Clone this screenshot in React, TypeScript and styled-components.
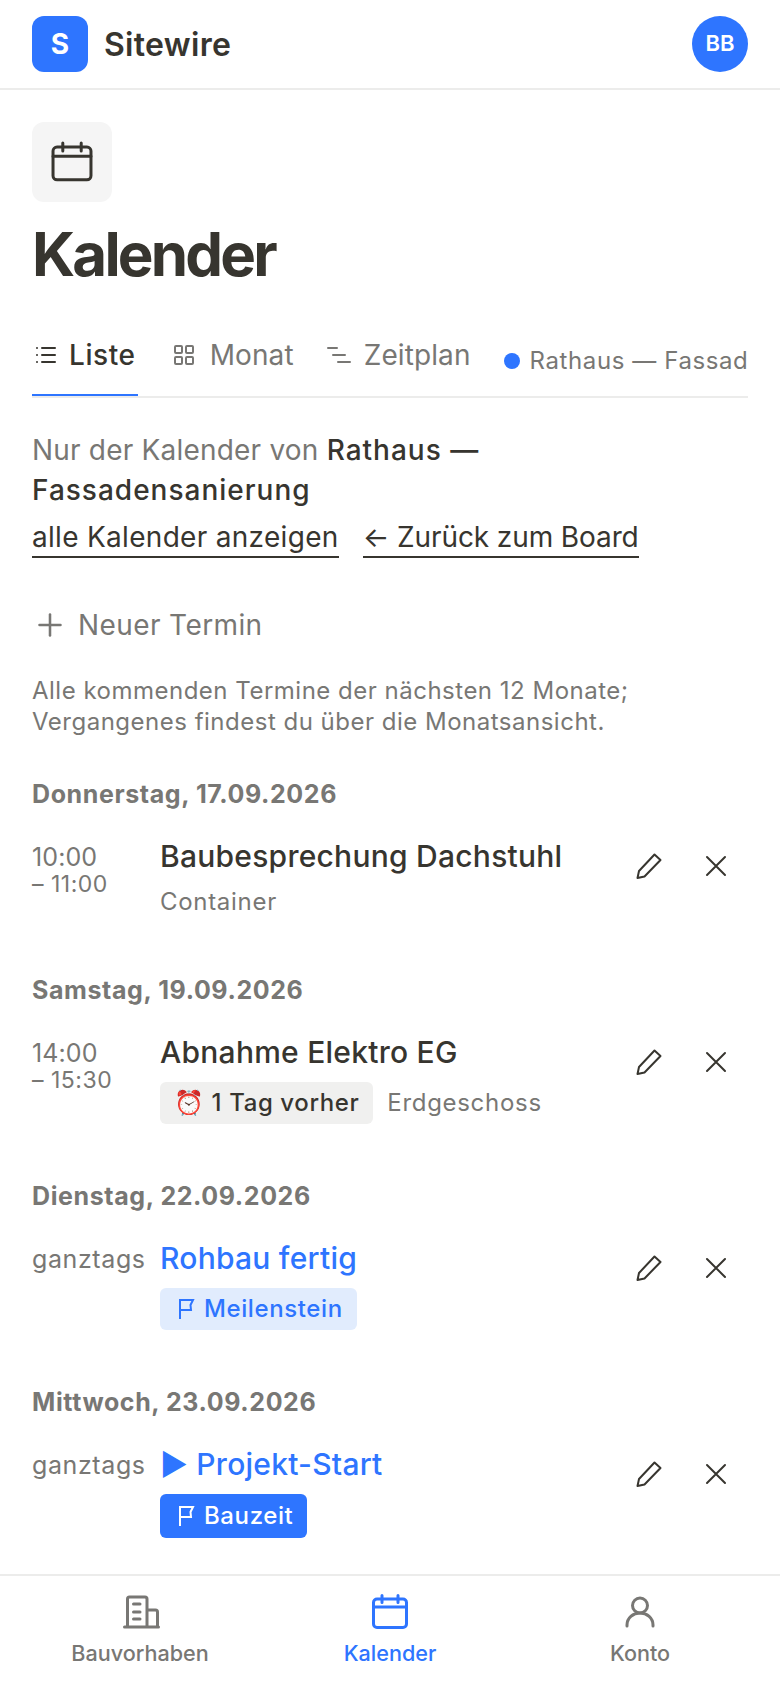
import styled, { createGlobalStyle } from 'styled-components';
import { LayoutGrid, List, Plus } from 'lucide-react';

const INK = '#37352f';
const MUTED = '#787774';
const BLUE = '#2e75ff';
const LINE = '#ececeb';

const GlobalStyle = createGlobalStyle`
  * {
    box-sizing: border-box;
  }

  html,
  body {
    margin: 0;
    padding: 0;
    background: #fff;
  }

  body {
    font-family: Inter, 'Noto Sans', sans-serif;
    color: ${INK};
  }
`;

const Shell = styled.div`
  display: flex;
  flex-direction: column;
  width: 780px;
  height: 1688px;
  overflow: hidden;
`;

const TopBar = styled.header`
  display: flex;
  align-items: center;
  justify-content: space-between;
  flex: none;
  height: 90px;
  padding: 0 32px;
  border-bottom: 2px solid ${LINE};
`;

const Brand = styled.div`
  display: flex;
  align-items: center;
  gap: 16px;
  font-size: 32px;
  font-weight: 600;
  letter-spacing: 0.3px;
`;

const LogoMark = styled.div`
  display: grid;
  place-items: center;
  width: 56px;
  height: 56px;
  border-radius: 12px;
  background: ${BLUE};
  color: #fff;
  font-size: 28px;
  font-weight: 700;
`;

const Avatar = styled.div`
  display: grid;
  place-items: center;
  width: 56px;
  height: 56px;
  padding-bottom: 3px;
  border-radius: 50%;
  background: ${BLUE};
  color: #fff;
  font-size: 22px;
  font-weight: 600;
`;

const Main = styled.main`
  flex: 1;
  min-height: 0;
  overflow: hidden;
  padding: 32px 32px 0;
`;

const IconTile = styled.div`
  display: grid;
  place-items: center;
  width: 80px;
  height: 80px;
  border-radius: 12px;
  background: #f5f5f5;
  color: ${INK};
`;

const PageTitle = styled.h1`
  margin: 16px 0 0;
  font-size: 60px;
  line-height: 72px;
  font-weight: 700;
  letter-spacing: -2.8px;
`;

const TabBar = styled.nav`
  display: flex;
  align-items: flex-start;
  height: 75px;
  margin-top: 33px;
  border-bottom: 2px solid ${LINE};
`;

const Tab = styled.div<{ $active?: boolean; $gap: number; $trail: number }>`
  display: flex;
  align-items: center;
  flex: none;
  gap: ${({ $gap }) => $gap}px;
  height: 73px;
  margin-right: ${({ $trail }) => $trail}px;
  padding: 0 2px 8px;
  font-size: 28px;
  font-weight: ${({ $active }) => ($active ? 500 : 400)};
  letter-spacing: ${({ $active }) => ($active ? '0.6px' : '0.1px')};
  color: ${({ $active }) => ($active ? INK : MUTED)};
  border-bottom: 2px solid ${({ $active }) => ($active ? BLUE : 'transparent')};
`;

const ProjectFilter = styled.div`
  display: flex;
  align-items: center;
  gap: 10px;
  min-width: 0;
  flex: 1;
  height: 73px;
  padding-top: 2px;
  margin-left: -2px;
  font-size: 24px;
  letter-spacing: 0.6px;
  color: ${MUTED};
  white-space: nowrap;
  overflow: hidden;
`;

const Dot = styled.span`
  flex: none;
  width: 16px;
  height: 16px;
  border-radius: 50%;
  background: ${BLUE};
`;

const ScopeText = styled.p`
  margin: 32px 0 0;
  max-width: 520px;
  font-size: 28px;
  line-height: 40px;
  color: ${MUTED};
  letter-spacing: 0.2px;

  strong {
    color: ${INK};
    font-weight: 500;
    letter-spacing: 1px;
  }
`;

const LinkRow = styled.div`
  display: flex;
  gap: 24px;
  margin-top: 9px;
`;

const TextLink = styled.a<{ $tight?: boolean }>`
  font-size: 28px;
  line-height: 37px;
  color: ${INK};
  letter-spacing: ${({ $tight }) => ($tight ? '-0.1px' : '0.3px')};
  border-bottom: 2px solid ${INK};
`;

const NewButton = styled.div`
  display: flex;
  align-items: center;
  gap: 10px;
  margin-top: 45px;
  height: 44px;
  font-size: 28px;
  letter-spacing: 0.4px;
  color: ${MUTED};
`;

const Hint = styled.p`
  margin: 28px 0 0;
  font-size: 24px;
  line-height: 31px;
  letter-spacing: 0.5px;
  color: ${MUTED};
`;

const DayGroup = styled.section<{ $gap: number }>`
  margin-top: ${({ $gap }) => $gap}px;
`;

const DayLabel = styled.h2`
  margin: 0;
  font-size: 25px;
  line-height: 32px;
  font-weight: 700;
  letter-spacing: 0.6px;
  color: ${MUTED};
`;

const EventRow = styled.div`
  display: grid;
  grid-template-columns: 128px 1fr auto;
  margin-top: 26px;
`;

const TimeCol = styled.div<{ $allDay?: boolean }>`
  padding-top: 6px;
  font-size: 25px;
  line-height: 30px;
  letter-spacing: ${({ $allDay }) => ($allDay ? '0.6px' : '0.1px')};
  color: ${MUTED};
  white-space: nowrap;

  small {
    display: block;
    margin-top: -1px;
    font-size: 23px;
    line-height: 26px;
    letter-spacing: 0.5px;
  }
`;

const Body = styled.div`
  min-width: 0;
`;

const EventTitle = styled.div<{ $accent?: boolean }>`
  font-size: 30px;
  line-height: 40px;
  font-weight: 500;
  letter-spacing: 0.25px;
  color: ${({ $accent }) => ($accent ? BLUE : INK)};
`;

const MetaRow = styled.div`
  display: flex;
  align-items: center;
  gap: 14px;
  margin-top: 10px;
  font-size: 24px;
  line-height: 32px;
  letter-spacing: 0.7px;
  color: ${MUTED};
`;

const Chip = styled.span<{ $tone: 'gray' | 'soft' | 'solid' }>`
  display: inline-flex;
  align-items: center;
  gap: 6px;
  height: ${({ $tone }) => ($tone === 'solid' ? 44 : 42)}px;
  padding: 0 14px;
  border-radius: 6px;
  font-size: 24px;
  font-weight: 500;
  letter-spacing: 0.6px;
  background: ${({ $tone }) =>
    $tone === 'gray' ? '#f0f0ef' : $tone === 'soft' ? '#e1ecfd' : BLUE};
  color: ${({ $tone }) => ($tone === 'gray' ? INK : $tone === 'soft' ? BLUE : '#fff')};
`;

const Actions = styled.div`
  display: flex;
  gap: 3px;
`;

const IconButton = styled.button`
  display: grid;
  place-items: center;
  width: 64px;
  height: 60px;
  padding: 0;
  border: 0;
  background: none;
  color: ${INK};
`;

const BottomNav = styled.nav`
  display: grid;
  grid-template-columns: repeat(3, 1fr);
  flex: none;
  height: 114px;
  padding: 0 15px;
  border-top: 2px solid ${LINE};
`;

const NavItem = styled.div<{ $active?: boolean }>`
  display: flex;
  flex-direction: column;
  align-items: center;
  gap: 8px;
  padding-top: 16px;
  font-size: 21.6px;
  font-weight: 500;
  color: ${({ $active }) => ($active ? BLUE : MUTED)};
`;

function CalendarIcon({ size }: { size: number }) {
  const stroke = (3 * 40) / size;
  return (
    <svg width={size} height={size} viewBox="0 0 40 40" fill="none" stroke="currentColor" strokeWidth={stroke} strokeLinecap="round">
      <rect x="3.5" y="7" width="33" height="28.500" rx="3.500" />
      <path d="M12 3.500v7M28 3.500v7M3.500 15h33" />
    </svg>
  );
}

function TimelineIcon() {
  return (
    <svg width="26" height="26" viewBox="0 0 26 26" fill="none" stroke="currentColor" strokeWidth="2" strokeLinecap="round">
      <path d="M2 6h9M7 13h12M12 20h12" />
    </svg>
  );
}

function PenIcon() {
  return (
    <svg width="28" height="28" viewBox="0 0 28 28" fill="none" stroke="currentColor" strokeWidth="2" strokeLinejoin="round">
      <path d="M2.500 26 4 19 19.500 2.500 25.500 8 9.500 24.500Z" />
    </svg>
  );
}

function CloseIcon() {
  return (
    <svg width="24" height="24" viewBox="0 0 24 24" fill="none" stroke="currentColor" strokeWidth="2" strokeLinecap="round">
      <path d="M3 3l18 18M21 3 3 21" />
    </svg>
  );
}

function FlagIcon() {
  return (
    <svg width="24" height="24" viewBox="0 0 24 24" fill="none" stroke="currentColor" strokeWidth="2">
      <path d="M6 22V3h13l-2.500 5 .5 5H6" />
    </svg>
  );
}

function BuildingIcon() {
  return (
    <svg width="40" height="40" viewBox="0 0 40 40" fill="none" stroke="currentColor" strokeWidth="3" strokeLinecap="round" strokeLinejoin="round">
      <path d="M4.500 35h34M7.500 35V7a2 2 0 0 1 2-2h15.500a2 2 0 0 1 2 2v28M27 18h8.500a2 2 0 0 1 2 2v15M13.500 12h6.500M13.500 20h6.500M13.500 27h6.500" />
    </svg>
  );
}

function PersonIcon() {
  return (
    <svg width="40" height="40" viewBox="0 0 40 40" fill="none" stroke="currentColor" strokeWidth="3" strokeLinecap="round">
      <circle cx="20" cy="13.500" r="7.500" />
      <path d="M7 34v-1c0-7 6-12 13-12s13 5 13 12v1" />
    </svg>
  );
}

function RowActions() {
  return (
    <Actions>
      <IconButton>
        <PenIcon />
      </IconButton>
      <IconButton>
        <CloseIcon />
      </IconButton>
    </Actions>
  );
}

export default function App() {
  return (
    <Shell>
      <GlobalStyle />
      <TopBar>
        <Brand>
          <LogoMark>S</LogoMark>
          Sitewire
        </Brand>
        <Avatar>BB</Avatar>
      </TopBar>

      <Main>
        <IconTile>
          <CalendarIcon size={46} />
        </IconTile>
        <PageTitle>Kalender</PageTitle>

        <TabBar>
          <Tab $active $gap={11} $trail={32}>
            <List size={24} strokeWidth={2} />
            Liste
          </Tab>
          <Tab $gap={14} $trail={28}>
            <LayoutGrid size={24} strokeWidth={2} />
            Monat
          </Tab>
          <Tab $gap={12} $trail={33}>
            <TimelineIcon />
            Zeitplan
          </Tab>
          <ProjectFilter>
            <Dot />
            Rathaus — Fassadensanierung
          </ProjectFilter>
        </TabBar>

        <ScopeText>
          Nur der Kalender von <strong>Rathaus — Fassadensanierung</strong>
        </ScopeText>
        <LinkRow>
          <TextLink>alle Kalender anzeigen</TextLink>
          <TextLink $tight>← Zurück zum Board</TextLink>
        </LinkRow>

        <NewButton>
          <Plus size={36} strokeWidth={1.7} />
          Neuer Termin
        </NewButton>

        <Hint>
          Alle kommenden Termine der nächsten 12 Monate;
          <br />
          Vergangenes findest du über die Monatsansicht.
        </Hint>

        <DayGroup $gap={41}>
          <DayLabel>Donnerstag, 17.09.2026</DayLabel>
          <EventRow>
            <TimeCol>
              10:00
              <small>– 11:00</small>
            </TimeCol>
            <Body>
              <EventTitle>Baubesprechung Dachstuhl</EventTitle>
              <MetaRow>Container</MetaRow>
            </Body>
            <RowActions />
          </EventRow>
        </DayGroup>

        <DayGroup $gap={56}>
          <DayLabel>Samstag, 19.09.2026</DayLabel>
          <EventRow>
            <TimeCol>
              14:00
              <small>– 15:30</small>
            </TimeCol>
            <Body>
              <EventTitle>Abnahme Elektro EG</EventTitle>
              <MetaRow>
                <Chip $tone="gray">⏰ 1 Tag vorher</Chip>
                Erdgeschoss
              </MetaRow>
            </Body>
            <RowActions />
          </EventRow>
        </DayGroup>

        <DayGroup $gap={56}>
          <DayLabel>Dienstag, 22.09.2026</DayLabel>
          <EventRow>
            <TimeCol $allDay>ganztags</TimeCol>
            <Body>
              <EventTitle $accent>Rohbau fertig</EventTitle>
              <MetaRow>
                <Chip $tone="soft">
                  <FlagIcon />
                  Meilenstein
                </Chip>
              </MetaRow>
            </Body>
            <RowActions />
          </EventRow>
        </DayGroup>

        <DayGroup $gap={56}>
          <DayLabel>Mittwoch, 23.09.2026</DayLabel>
          <EventRow>
            <TimeCol $allDay>ganztags</TimeCol>
            <Body>
              <EventTitle $accent>▶ Projekt-Start</EventTitle>
              <MetaRow>
                <Chip $tone="solid">
                  <FlagIcon />
                  Bauzeit
                </Chip>
              </MetaRow>
            </Body>
            <RowActions />
          </EventRow>
        </DayGroup>
      </Main>

      <BottomNav>
        <NavItem>
          <BuildingIcon />
          Bauvorhaben
        </NavItem>
        <NavItem $active>
          <CalendarIcon size={40} />
          Kalender
        </NavItem>
        <NavItem>
          <PersonIcon />
          Konto
        </NavItem>
      </BottomNav>
    </Shell>
  );
}
